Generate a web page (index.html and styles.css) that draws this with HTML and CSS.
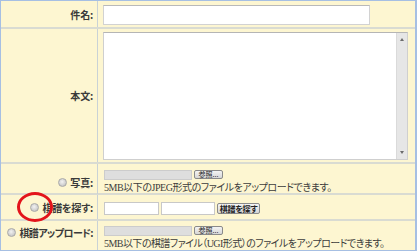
FILE: index.html
```html
<!DOCTYPE html>
<html lang="ja">
<head>
<meta charset="utf-8">
<title>投稿フォーム</title>
<link rel="stylesheet" href="styles.css">
</head>
<body>
<div class="form">
  <div class="row r1">
    <div class="label">件名:</div>
    <div class="field"><span class="textbox title"></span></div>
  </div>
  <div class="row r2">
    <div class="label">本文:</div>
    <div class="field">
      <div class="textarea"><div class="scroll"><span class="arrow up"></span><span class="arrow down"></span></div></div>
    </div>
  </div>
  <div class="row r3">
    <div class="label"><span class="radio"></span>写真:</div>
    <div class="field">
      <div class="file"><span class="filebox"></span><span class="btn ref">参照...</span></div>
      <div class="note">5MB以下のJPEG形式のファイルをアップロードできます。</div>
    </div>
  </div>
  <div class="row r4">
    <div class="label"><span class="radio"></span>棋譜を探す:</div>
    <div class="field search">
      <span class="textbox small"></span><span class="textbox small"></span><span class="btn find">棋譜を探す</span>
    </div>
  </div>
  <div class="row r5">
    <div class="label"><span class="radio"></span>棋譜アップロード:</div>
    <div class="field">
      <div class="file"><span class="filebox"></span><span class="btn ref">参照...</span></div>
      <div class="note long">5MB以下の棋譜ファイル（UGI形式）のファイルをアップロードできます。</div>
    </div>
  </div>
</div>
<span class="highlight"></span>
</body>
</html>
```
FILE: styles.css
```css
body {
  margin: 0;
  background: #ffffff;
  font-family: "Liberation Serif", "Noto Sans CJK JP", serif;
}

.form {
  width: 417px;
  box-sizing: border-box;
  border: 1px solid #a6bfe3;
  border-right-width: 2px;
  background: #fdf6d1;
}

.row {
  display: grid;
  grid-template-columns: 97px 1fr;
}

.row + .row {
  border-top: 2px solid #d9dbd2;
}

.r1 { height: 26px; }
.r2 { height: 133px; }
.r3 { height: 29px; }
.r4 { height: 24px; }
.r5 { height: 29px; }

.label {
  box-sizing: border-box;
  border-right: 1px solid #c9d2d6;
  display: flex;
  justify-content: flex-end;
  align-items: center;
  padding-right: 4px;
  font-family: "Noto Sans CJK JP", sans-serif;
  font-feature-settings: "palt";
  font-weight: bold;
  font-size: 10px;
  color: #3a3a3a;
  white-space: nowrap;
  letter-spacing: -0.2px;
}

.r3 .label { padding-top: 6px; }
.r5 .label { padding-bottom: 6px; letter-spacing: -0.6px; }

.radio {
  width: 7px;
  height: 7px;
  border-radius: 50%;
  border: 1px solid #a9a9a9;
  background: radial-gradient(circle at 45% 40%, #f2f2f2 0, #d0d0d0 60%, #b8b8b8 100%);
  margin-right: 3px;
  flex: none;
}

.field {
  padding-left: 5px;
}

.r1 .field { padding-top: 4px; }
.r2 .field { padding-top: 3px; }
.r3 .field { padding-top: 5px; }
.r4 .field { padding-top: 7px; }
.r5 .field { padding-top: 4px; }

.textbox {
  display: block;
  box-sizing: border-box;
  background: #ffffff;
  border: 1px solid #d2d2d2;
  border-top-color: #b9b9b9;
}

.title {
  width: 267px;
  height: 20px;
}

.textarea {
  box-sizing: border-box;
  width: 305px;
  height: 128px;
  background: #ffffff;
  border: 1px solid #cfcfcf;
  border-top-color: #b5b5b5;
  display: flex;
  justify-content: flex-end;
}

.scroll {
  width: 10px;
  background: #e6e6e6;
  border-left: 1px solid #dadada;
  position: relative;
}

.arrow {
  position: absolute;
  left: 3px;
  width: 0;
  height: 0;
  border-left: 2px solid transparent;
  border-right: 2px solid transparent;
}

.arrow.up {
  top: 5px;
  border-bottom: 3px solid #6b6b6b;
}

.arrow.down {
  bottom: 5px;
  border-top: 3px solid #6b6b6b;
}

.file {
  display: flex;
  align-items: center;
  height: 11px;
  padding-left: 1px;
}

.filebox {
  width: 88px;
  height: 10px;
  background: #dedede;
  border: 1px solid #cccccc;
  box-sizing: border-box;
}

.btn {
  box-sizing: border-box;
  display: flex;
  align-items: center;
  justify-content: center;
  border: 1px solid #8a8a8a;
  border-radius: 2px;
  background: linear-gradient(#f4f4f4, #d6d6d6);
  font-family: "Noto Sans CJK JP", sans-serif;
  color: #222;
  white-space: nowrap;
}

.ref {
  width: 29px;
  height: 9px;
  margin-left: 2px;
  font-size: 7px;
  line-height: 1;
  padding-bottom: 1px;
}

.note {
  margin-top: 2px;
  padding-left: 1px;
  font-size: 10px;
  line-height: 12px;
  color: #3c3c3c;
  font-feature-settings: "palt";
  white-space: nowrap;
  letter-spacing: -0.45px;
}

.note.long {
  letter-spacing: -0.55px;
}

.search {
  display: flex;
  align-items: flex-start;
}

.small {
  width: 55px;
  height: 13px;
  margin-left: 1px;
  border-color: #c8c8c8;
}

.small + .small {
  width: 54px;
  margin-left: 2px;
}

.find {
  width: 43px;
  height: 11px;
  margin-left: 2px;
  margin-top: 1px;
  font-size: 8px;
  font-weight: bold;
  letter-spacing: -0.3px;
  font-feature-settings: "palt";
}

.highlight {
  position: absolute;
  left: 17px;
  top: 192px;
  width: 36px;
  height: 30px;
  box-sizing: border-box;
  border: 3px solid #e3141b;
  border-radius: 50%;
}
```
